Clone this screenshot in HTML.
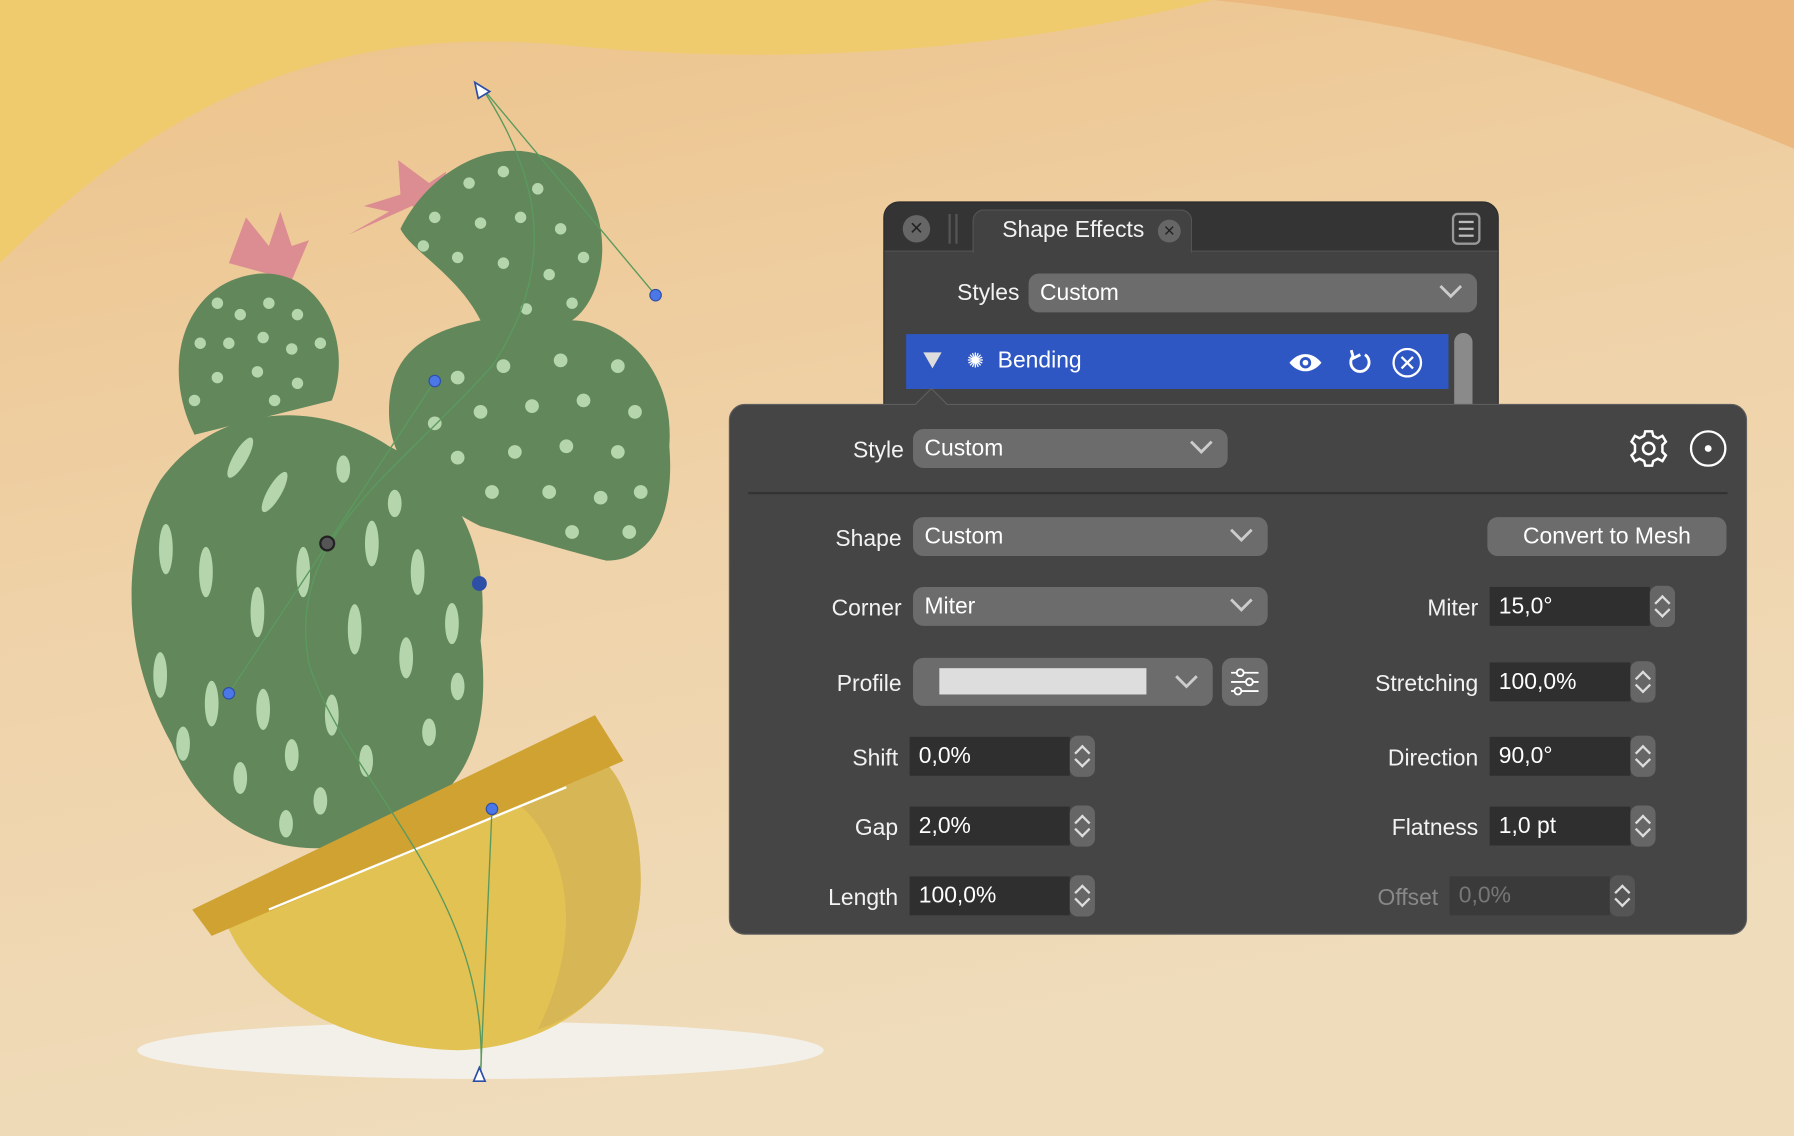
<!DOCTYPE html>
<html><head><meta charset="utf-8"><style>
*{margin:0;padding:0;box-sizing:border-box}
body{width:1794px;height:1136px;overflow:hidden;background:#eed7b0;font-family:"Liberation Sans",sans-serif}
#s{position:absolute;left:0;top:0;width:1568px;height:993px;transform:scale(1.14413);transform-origin:0 0}
.a{position:absolute}
.lbl{position:absolute;color:#f2f2f2;font-size:20px;text-align:right}
.dd{position:absolute;background:#6c6c6c;border-radius:9px;color:#fff;font-size:20px;padding-left:10px;line-height:34px;height:34px}
.dd svg{position:absolute;right:12px;top:9px}
.fld{position:absolute;background:#2f2f2f;color:#fff;font-size:20px;line-height:34px;height:34px;padding-left:8px}
.st{position:absolute;background:#666;border-radius:7px;width:22px;height:36px}
</style></head><body><div id="s">
<svg class="a" style="left:0;top:0" width="1568" height="993" viewBox="0 0 1568 993">
<defs>
<linearGradient id="bg" x1="0" y1="0" x2="0.3" y2="1"><stop offset="0" stop-color="#ecc289"/><stop offset="0.5" stop-color="#efd2a8"/><stop offset="1" stop-color="#efdcbb"/></linearGradient>
</defs>
<rect width="1568" height="993" fill="url(#bg)"/>
<path d="M0 0H1060C900 40 700 60 500 40C300 20 150 80 0 230Z" fill="#efcb6e"/>
<path d="M1060 0H1568V130C1400 60 1250 20 1060 0Z" fill="#ebb97f"/>
<ellipse cx="420" cy="918" rx="300" ry="25" fill="#f3f0ea"/>
<path d="M200 230L215 190L235 215L245 185L255 215L270 210L255 245Z" fill="#dc8d92"/>
<path d="M360 180L305 205L340 185L318 180L350 170L348 140L375 160L390 150L380 190Z" fill="#dc8d92"/>
<path d="M170 380C140 320 160 250 220 240C280 230 310 300 290 350Z" fill="#62875b"/>
<path d="M140 420C190 350 280 350 340 390C400 420 430 480 420 560C430 640 410 700 330 730C260 760 180 730 150 650C100 560 110 470 140 420Z" fill="#62875b"/>
<path d="M350 200C380 140 450 110 500 150C540 190 530 260 500 280C540 280 590 320 585 390C590 450 570 490 530 490C490 480 460 470 420 460C380 440 340 410 340 360C340 310 370 290 420 280C400 240 360 220 350 200Z" fill="#62875b"/>
<path d="M195 800C220 870 300 915 400 918C490 915 560 860 560 770C560 710 540 670 520 660Z" fill="#e2c252"/>
<path d="M450 700C500 740 510 820 470 900C530 880 560 830 560 770C560 710 540 670 520 660Z" fill="#d7b655"/>
<path d="M168 795L520 625L545 665L185 818Z" fill="#cfa232"/>
<line x1="235" y1="795" x2="495" y2="688" stroke="#fff" stroke-width="2"/>
<g fill="#b5d6ac">
<ellipse cx="210" cy="400" rx="6" ry="20" transform="rotate(30 210 400)"/><ellipse cx="240" cy="430" rx="6" ry="20" transform="rotate(30 240 430)"/><ellipse cx="180" cy="500" rx="6" ry="22"/><ellipse cx="145" cy="480" rx="6" ry="22"/><ellipse cx="225" cy="535" rx="6" ry="22"/><ellipse cx="265" cy="500" rx="6" ry="22"/><ellipse cx="310" cy="550" rx="6" ry="22"/><ellipse cx="325" cy="475" rx="6" ry="20"/><ellipse cx="365" cy="500" rx="6" ry="20"/><ellipse cx="355" cy="575" rx="6" ry="18"/><ellipse cx="140" cy="590" rx="6" ry="20"/><ellipse cx="185" cy="615" rx="6" ry="20"/><ellipse cx="230" cy="620" rx="6" ry="18"/><ellipse cx="290" cy="625" rx="6" ry="18"/><ellipse cx="395" cy="545" rx="6" ry="18"/><ellipse cx="160" cy="650" rx="6" ry="15"/><ellipse cx="210" cy="680" rx="6" ry="14"/><ellipse cx="255" cy="660" rx="6" ry="14"/><ellipse cx="320" cy="665" rx="6" ry="14"/><ellipse cx="250" cy="720" rx="6" ry="12"/><ellipse cx="300" cy="410" rx="6" ry="12"/><ellipse cx="345" cy="440" rx="6" ry="12"/><ellipse cx="400" cy="600" rx="6" ry="12"/><ellipse cx="375" cy="640" rx="6" ry="12"/><ellipse cx="280" cy="700" rx="6" ry="12"/>
<circle cx="190" cy="265" r="5"/><circle cx="210" cy="275" r="5"/><circle cx="235" cy="265" r="5"/><circle cx="260" cy="275" r="5"/><circle cx="175" cy="300" r="5"/><circle cx="200" cy="300" r="5"/><circle cx="230" cy="295" r="5"/><circle cx="255" cy="305" r="5"/><circle cx="280" cy="300" r="5"/><circle cx="190" cy="330" r="5"/><circle cx="225" cy="325" r="5"/><circle cx="260" cy="335" r="5"/><circle cx="170" cy="350" r="5"/><circle cx="240" cy="350" r="5"/>
<circle cx="410" cy="160" r="5"/><circle cx="440" cy="150" r="5"/><circle cx="470" cy="165" r="5"/><circle cx="380" cy="190" r="5"/><circle cx="420" cy="195" r="5"/><circle cx="455" cy="190" r="5"/><circle cx="490" cy="200" r="5"/><circle cx="370" cy="215" r="5"/><circle cx="400" cy="225" r="5"/><circle cx="440" cy="230" r="5"/><circle cx="480" cy="240" r="5"/><circle cx="510" cy="225" r="5"/><circle cx="460" cy="270" r="5"/><circle cx="500" cy="265" r="5"/>
<circle cx="400" cy="330" r="6"/><circle cx="440" cy="320" r="6"/><circle cx="490" cy="315" r="6"/><circle cx="540" cy="320" r="6"/><circle cx="380" cy="370" r="6"/><circle cx="420" cy="360" r="6"/><circle cx="465" cy="355" r="6"/><circle cx="510" cy="350" r="6"/><circle cx="555" cy="360" r="6"/><circle cx="400" cy="400" r="6"/><circle cx="450" cy="395" r="6"/><circle cx="495" cy="390" r="6"/><circle cx="540" cy="395" r="6"/><circle cx="430" cy="430" r="6"/><circle cx="480" cy="430" r="6"/><circle cx="525" cy="435" r="6"/><circle cx="560" cy="430" r="6"/><circle cx="500" cy="465" r="6"/><circle cx="550" cy="465" r="6"/>
</g>
<g fill="none" stroke="#5b9a5e" stroke-width="1.2">
<path d="M420 75C470 150 490 230 430 320C340 420 250 470 270 580C300 680 430 780 420 940"/>
<path d="M420 75L573 258M380 333L200 606M430 707L420 940"/>
</g>
<g fill="#4b78e6" stroke="#2e4fa8"><circle cx="573" cy="258" r="5"/><circle cx="380" cy="333" r="5"/><circle cx="200" cy="606" r="5"/><circle cx="430" cy="707" r="5"/><circle cx="419" cy="510" r="6" fill="#2e4fa8"/></g>
<circle cx="286" cy="475" r="6" fill="#555" stroke="#222" stroke-width="2"/>
<path d="M415 72L428 80L418 86Z" fill="#fff" stroke="#2e4fa8" stroke-width="1.5"/>
<path d="M419 933L414 945H424Z" fill="#fff" stroke="#2e4fa8" stroke-width="1.5"/>
</svg>

<!-- top panel -->
<div class="a" style="left:772px;top:176px;width:538px;height:190px;background:#424242;border-radius:14px;border:1px solid #2a2a2a;overflow:hidden">
 <div class="a" style="left:0;top:0;width:538px;height:43px;background:#343434;border-bottom:1px solid #555"></div>
 <div class="a" style="left:77px;top:6px;width:192px;height:38px;background:#424242;border-radius:10px 10px 0 0;border:1px solid #555;border-bottom:none"></div>
 <div class="a" style="left:16px;top:11px;width:24px;height:24px;border-radius:50%;background:#666;color:#222;font-size:20px;line-height:24px;text-align:center">×</div>
 <div class="a" style="left:56px;top:10px;width:2px;height:26px;background:#555"></div><div class="a" style="left:62px;top:10px;width:2px;height:26px;background:#555"></div>
 <div class="a" style="left:103px;top:13px;color:#f2f2f2;font-size:20px">Shape Effects</div>
 <div class="a" style="left:239px;top:15px;width:20px;height:20px;border-radius:50%;background:#666;color:#222;font-size:17px;line-height:20px;text-align:center">×</div>
 <div class="a" style="left:496px;top:9px;width:25px;height:28px;border:2px solid #999;border-radius:5px"><div style="margin:5px 4px;height:2px;background:#bbb;box-shadow:0 6px #bbb,0 12px #bbb"></div></div>
 <div class="lbl" style="left:40px;top:68px;width:78px">Styles</div>
 <div class="dd" style="left:126px;top:62px;width:392px">Custom<svg width="22" height="14"><path d="M2 2L11 11L20 2" stroke="#ccc" stroke-width="2.5" fill="none"/></svg></div>
 <div class="a" style="left:19px;top:115px;width:474px;height:48px;background:#2f57c4"></div>
 <div class="a" style="left:34px;top:131px;width:0;height:0;border-left:8px solid transparent;border-right:8px solid transparent;border-top:14px solid #ddd"></div>
 <div class="a" style="left:72px;top:128px;color:#fff;font-size:18px">✺</div>
 <div class="a" style="left:99px;top:127px;color:#fff;font-size:20px">Bending</div>
 <svg class="a" style="left:352px;top:127px" width="120" height="26"><path d="M2 13C10 3 22 3 30 13C22 23 10 23 2 13Z" fill="#fff"/><circle cx="16" cy="13" r="5" fill="#2f57c4"/><circle cx="16" cy="13" r="2.5" fill="#fff"/><path d="M58 7A8 8 0 1 0 68 6" stroke="#fff" stroke-width="2.5" fill="none"/><path d="M56 2L58 9L64 6" stroke="#fff" stroke-width="2.5" fill="none"/><circle cx="105" cy="13" r="12" stroke="#fff" stroke-width="2" fill="none"/><path d="M100 8L110 18M110 8L100 18" stroke="#fff" stroke-width="2"/></svg>
 <div class="a" style="left:498px;top:114px;width:16px;height:80px;background:#8a8a8a;border-radius:8px"></div>
</div>

<!-- main panel -->
<div class="a" style="left:637px;top:353px;width:890px;height:464px;background:#454545;border-radius:14px;border:1.5px solid #5e5e5e">
 <div class="a" style="left:166px;top:-11px;width:20px;height:20px;background:#454545;border-left:1.5px solid #5e5e5e;border-top:1.5px solid #5e5e5e;transform:rotate(45deg)"></div>
 <div class="lbl" style="left:60px;top:29px;width:92px">Style</div>
 <div class="dd" style="left:160px;top:21px;width:275px">Custom<svg width="22" height="14"><path d="M2 2L11 11L20 2" stroke="#ccc" stroke-width="2.5" fill="none"/></svg></div>
 <svg class="a" style="left:785px;top:20px" width="100" height="36"><g transform="translate(18 18)" fill="none" stroke="#fff" stroke-width="2.2"><circle r="5"/><path d="M-3 -15H3L4 -11L8 -9L12 -11L15 -6L12 -3V3L15 6L12 11L8 9L4 11L3 15H-3L-4 11L-8 9L-12 11L-15 6L-12 3V-3L-15 -6L-12 -11L-8 -9L-4 -11Z"/></g><circle cx="70" cy="18" r="15" fill="none" stroke="#fff" stroke-width="2"/><circle cx="70" cy="18" r="3" fill="#fff"/></svg>
 <div class="a" style="left:16px;top:76px;width:856px;height:2px;background:#333"></div>
 <div class="lbl" style="left:40px;top:106px;width:110px">Shape</div>
 <div class="dd" style="left:160px;top:98px;width:310px">Custom<svg width="22" height="14"><path d="M2 2L11 11L20 2" stroke="#ccc" stroke-width="2.5" fill="none"/></svg></div>
 <div class="a" style="left:662px;top:98px;width:209px;height:34px;background:#6c6c6c;border-radius:9px;color:#fff;font-size:20px;line-height:34px;text-align:center">Convert to Mesh</div>
 <div class="lbl" style="left:40px;top:167px;width:110px">Corner</div>
 <div class="dd" style="left:160px;top:159px;width:310px">Miter<svg width="22" height="14"><path d="M2 2L11 11L20 2" stroke="#ccc" stroke-width="2.5" fill="none"/></svg></div>
 <div class="lbl" style="left:520px;top:167px;width:134px">Miter</div>
 <div class="fld" style="left:664px;top:159px;width:140px">15,0°</div><div class="st" style="left:804px;top:158px"></div>
 <div class="lbl" style="left:40px;top:233px;width:110px">Profile</div>
 <div class="dd" style="left:160px;top:221px;width:262px;height:42px"><div style="position:absolute;left:23px;top:9px;width:181px;height:23px;background:#ddd"></div><svg width="22" height="14" style="top:14px"><path d="M2 2L11 11L20 2" stroke="#ccc" stroke-width="2.5" fill="none"/></svg></div>
 <div class="a" style="left:430px;top:221px;width:40px;height:42px;background:#6c6c6c;border-radius:9px"><svg width="40" height="42"><g stroke="#fff" stroke-width="1.6" fill="#6c6c6c"><path d="M8 13H32M8 21H32M8 29H32"/><circle cx="16" cy="13" r="3"/><circle cx="24" cy="21" r="3"/><circle cx="14" cy="29" r="3"/></g></svg></div>
 <div class="lbl" style="left:500px;top:233px;width:154px">Stretching</div>
 <div class="fld" style="left:664px;top:225px;width:123px">100,0%</div><div class="st" style="left:787px;top:224px"></div>
 <div class="lbl" style="left:40px;top:298px;width:107px">Shift</div>
 <div class="fld" style="left:157px;top:290px;width:140px">0,0%</div><div class="st" style="left:297px;top:289px"></div>
 <div class="lbl" style="left:500px;top:298px;width:154px">Direction</div>
 <div class="fld" style="left:664px;top:290px;width:123px">90,0°</div><div class="st" style="left:787px;top:289px"></div>
 <div class="lbl" style="left:40px;top:359px;width:107px">Gap</div>
 <div class="fld" style="left:157px;top:351px;width:140px">2,0%</div><div class="st" style="left:297px;top:350px"></div>
 <div class="lbl" style="left:500px;top:359px;width:154px">Flatness</div>
 <div class="fld" style="left:664px;top:351px;width:123px">1,0 pt</div><div class="st" style="left:787px;top:350px"></div>
 <div class="lbl" style="left:40px;top:420px;width:107px">Length</div>
 <div class="fld" style="left:157px;top:412px;width:140px">100,0%</div><div class="st" style="left:297px;top:411px"></div>
 <div class="lbl" style="left:500px;top:420px;width:119px;color:#888">Offset</div>
 <div class="fld" style="left:629px;top:412px;width:140px;background:#3a3a3a;color:#777">0,0%</div><div class="st" style="left:769px;top:411px;background:#555"></div>
</div>
<style>.st::before,.st::after{content:"";position:absolute;left:6px;width:8px;height:8px;border-left:2px solid #ddd;border-top:2px solid #ddd}.st::before{top:10px;transform:rotate(45deg)}.st::after{top:16px;transform:rotate(225deg)}</style>
</div></body></html>
